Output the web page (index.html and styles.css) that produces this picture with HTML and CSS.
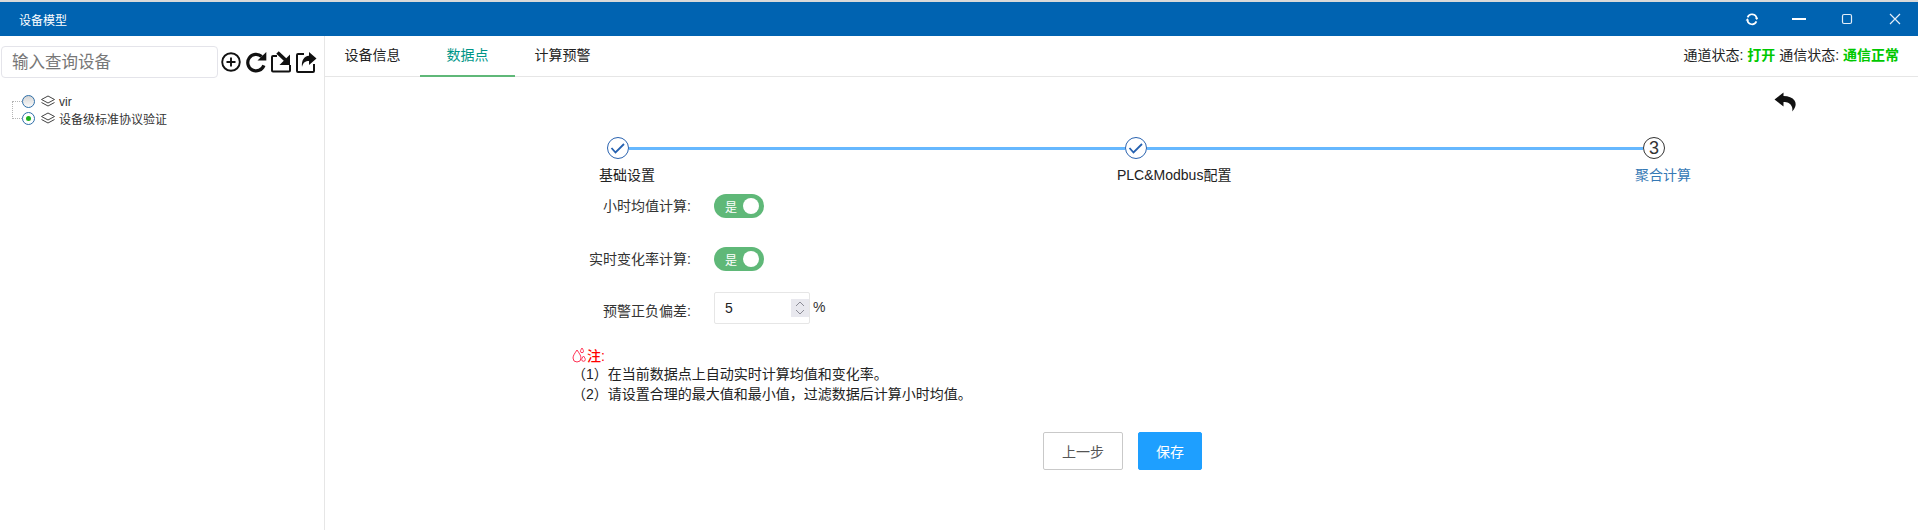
FILE: index.html
```html
<!DOCTYPE html>
<html lang="zh">
<head>
<meta charset="utf-8">
<title>设备模型</title>
<link rel="stylesheet" href="styles.css">
</head>
<body>
<header class="titlebar">
  <span class="title">设备模型</span>
  <div class="win-controls">
    <svg class="win-icon" viewBox="0 0 14 14"><path d="M3.600 5.400A4.700 4.700 0 0 1 12.700 6.400" fill="none" stroke="#fff" stroke-width="1.700"/><path d="M12.400 9.400A4.700 4.700 0 0 1 3.400 8.200" fill="none" stroke="#fff" stroke-width="1.700"/><path d="M10.900 5.800h3.600L12.700 8zM1.600 8.400h3.600L3.400 6.200z" fill="#fff"/></svg>
    <svg class="win-icon" viewBox="0 0 14 14"><path d="M0 7h14" stroke="#fff" stroke-width="2"/></svg>
    <svg class="win-icon" viewBox="0 0 14 14"><rect x="2.500" y="2.500" width="9" height="9" rx="1.500" fill="none" stroke="#e4eef8" stroke-width="1.200"/></svg>
    <svg class="win-icon" viewBox="0 0 14 14"><path d="M2 2l10 10M12 2L2 12" stroke="#e4eef8" stroke-width="1.200"/></svg>
  </div>
</header>
<div class="layout">
  <aside class="sidebar">
    <div class="search-row">
      <input class="search" type="text" placeholder="输入查询设备">
      <div class="tools">
        <svg class="tool" viewBox="0 0 22 22"><circle cx="11" cy="11" r="8.800" fill="none" stroke="#111" stroke-width="1.900"/><path d="M6.500 11h9M11 6.500v9" stroke="#111" stroke-width="1.900"/></svg>
        <svg class="tool" viewBox="0 0 22 22"><path d="M18.900 14.400A8.300 8.300 0 1 1 16.700 5.500" fill="none" stroke="#111" stroke-width="3.200"/><path d="M12.500 9.500h8.800V1z" fill="#111"/></svg>
        <svg class="tool" viewBox="0 0 22 22"><path d="M7 5H3a1 1 0 0 0-1 1v13.500a1 1 0 0 0 1 1h16a1 1 0 0 0 1-1V14" fill="none" stroke="#111" stroke-width="2"/><path d="M7.500 1.500l8 7.500" fill="none" stroke="#111" stroke-width="3.600"/><path d="M20 3.500V14H9.500z" fill="#111"/></svg>
        <svg class="tool" viewBox="0 0 22 22"><path d="M9 3H3a1 1 0 0 0-1 1v16a1 1 0 0 0 1 1h15a1 1 0 0 0 1-1v-7" fill="none" stroke="#111" stroke-width="2"/><path d="M14 1l7.500 6.500-7.500 6.500v-4C10.500 10 8 11.500 7 16 6.200 10 9 5 14 4.800z" fill="#111"/></svg>
      </div>
    </div>
    <ul class="tree">
      <li class="node node-first">
        <span class="radio"></span>
        <svg class="layers" viewBox="0 0 16 14"><path d="M8 1l6.500 3.500L8 8 1.500 4.500z" fill="none" stroke="#444" stroke-width="1"/><path d="M1.500 7.500L8 11l6.500-3.500" fill="none" stroke="#444" stroke-width="1"/></svg>
        <span>vir</span>
      </li>
      <li class="node">
        <span class="radio radio-on"></span>
        <svg class="layers" viewBox="0 0 16 14"><path d="M8 1l6.500 3.500L8 8 1.500 4.500z" fill="none" stroke="#444" stroke-width="1"/><path d="M1.500 7.500L8 11l6.500-3.500" fill="none" stroke="#444" stroke-width="1"/></svg>
        <span>设备级标准协议验证</span>
      </li>
    </ul>
  </aside>
  <main class="main">
    <nav class="tabs">
      <a class="tab">设备信息</a>
      <a class="tab tab-active">数据点</a>
      <a class="tab">计算预警</a>
      <div class="status">通道状态: <b class="ok">打开</b> 通信状态: <b class="ok">通信正常</b></div>
    </nav>
    <section class="content">
      <div class="back-row">
        <svg class="back" viewBox="0 0 22 20"><path d="M9.500 0.500L0.500 7.500l9 7V10c4 0 7 1 8.500 5 .5 1.500.5 3 0 4.500 4-4 4.500-8 2.500-11-2-3-6-4.500-11-4.500z" fill="#111"/></svg>
      </div>
      <div class="steps">
        <div class="step step-done">
          <div class="step-head">
            <span class="step-icon"><svg viewBox="1 1 20 20"><path d="M4.500 11l4 4.500L17 7" fill="none" stroke="#2561b0" stroke-width="1.800"/></svg></span>
            <span class="step-line"></span>
          </div>
          <div class="step-title">基础设置</div>
        </div>
        <div class="step step-done">
          <div class="step-head">
            <span class="step-icon"><svg viewBox="1 1 20 20"><path d="M4.500 11l4 4.500L17 7" fill="none" stroke="#2561b0" stroke-width="1.800"/></svg></span>
            <span class="step-line"></span>
          </div>
          <div class="step-title">PLC&amp;Modbus配置</div>
        </div>
        <div class="step step-last">
          <div class="step-head">
            <span class="step-icon step-icon-num">3</span>
          </div>
          <div class="step-title step-title-cur">聚合计算</div>
        </div>
      </div>
      <form class="form">
        <div class="form-row row-switch">
          <label class="form-label">小时均值计算:</label>
          <span class="switch"><span class="switch-text">是</span><span class="knob"></span></span>
        </div>
        <div class="form-row row-switch">
          <label class="form-label">实时变化率计算:</label>
          <span class="switch"><span class="switch-text">是</span><span class="knob"></span></span>
        </div>
        <div class="form-row row-number">
          <label class="form-label form-label-low">预警正负偏差:</label>
          <span class="number">
            <span class="number-value">5</span>
            <span class="spinner"><svg viewBox="0 0 18 18"><path d="M5 7l4-4 4 4M5 11l4 4 4-4" fill="none" stroke="#8c8c96" stroke-width="1"/></svg></span>
          </span>
          <span class="unit">%</span>
        </div>
      </form>
      <div class="note">
        <div class="note-head">
          <svg class="drops" viewBox="0 0 15 16"><path d="M5 3C3 6 1 8.500 1 11a4 4 0 0 0 8 0C9 8.500 7 6 5 3z" fill="none" stroke="#f35" stroke-width="1"/><path d="M11.500 9c-1 1.500-1.800 2.500-1.800 3.500a1.800 1.800 0 0 0 3.600 0c0-1-.8-2-1.800-3.500z" fill="none" stroke="#f35" stroke-width="1"/><path d="M10 1C9.200 2.500 8.500 3.200 8.500 4.200a1.500 1.500 0 0 0 3 0C11.500 3.200 10.800 2.500 10 1z" fill="none" stroke="#f35" stroke-width="1"/></svg>
          <span>注:</span>
        </div>
        <p class="note-line">（1）在当前数据点上自动实时计算均值和变化率。</p>
        <p class="note-line">（2）请设置合理的最大值和最小值，过滤数据后计算小时均值。</p>
      </div>
      <div class="actions">
        <button class="btn" type="button">上一步</button>
        <button class="btn btn-primary" type="button">保存</button>
      </div>
    </section>
  </main>
</div>
</body>
</html>
```
FILE: styles.css
```css
* { box-sizing: border-box; }
html, body { margin: 0; padding: 0; height: 100%; }
body {
  width: 1918px;
  height: 530px;
  overflow: hidden;
  background: #fff;
  font-family: "Liberation Sans", "Noto Sans CJK SC", sans-serif;
  color: #222;
  display: flex;
  flex-direction: column;
}
.titlebar {
  height: 36px;
  border-top: 2px solid #d9d9d9;
  background: #0063b1;
  color: #fff;
  display: flex;
  align-items: center;
  justify-content: space-between;
  padding-left: 19px;
  font-size: 12px;
  flex: none;
}
.win-controls { display: flex; align-items: center; padding-right: 16px; gap: 34px; }
.win-icon { width: 14px; height: 14px; display: block; }
.layout { flex: 1; display: flex; min-height: 0; }
.sidebar { width: 325px; border-right: 1px solid #e6e6e6; flex: none; padding: 10px 0 0 1px; }
.search-row { display: flex; align-items: center; }
.search {
  width: 217px; height: 32px; border: 1px solid #e4e4ea; border-radius: 4px;
  padding: 0 10px; font: 16.500px "Liberation Sans", "Noto Sans CJK SC", sans-serif; outline: none;
}
.search::placeholder { color: #777; }
.tools { display: flex; margin-left: 2px; gap: 3px; }
.tool { width: 22px; height: 22px; display: block; }
.tree { list-style: none; margin: 15px 0 0 11px; padding: 0; font-size: 12px; color: #333; }
.node { height: 17px; display: flex; align-items: center; position: relative; }
.node::before { content: ""; width: 10px; border-top: 1px dotted #b5b5b5; flex: none; }
.node-first::after {
  content: ""; position: absolute; left: 0; top: 8px; height: 18px; border-left: 1px dotted #b5b5b5;
}
.radio {
  width: 13px; height: 13px; border-radius: 50%; border: 1.500px solid #2d6ea8;
  background: linear-gradient(#d5d5d5, #fafafa); flex: none;
  display: flex; align-items: center; justify-content: center;
}
.radio-on { background: #fff; }
.radio-on::after { content: ""; width: 5px; height: 5px; border-radius: 50%; background: #1eb01e; }
.layers { width: 16px; height: 14px; margin: 0 3px 0 5px; flex: none; }
.main { flex: 1; min-width: 0; display: flex; flex-direction: column; }
.tabs {
  height: 41px; border-bottom: 1px solid #e6e6e6; display: flex; align-items: stretch; font-size: 14px; color: #222; flex: none;
}
.tab { width: 95px; text-align: center; line-height: 38px; height: 41px; }
.tab-active { color: #009688; border-bottom: 2px solid #5fb878; }
.status { margin-left: auto; font-size: 14px; line-height: 39px; padding-right: 19px; white-space: nowrap; }
.ok { color: #00c800; font-weight: bold; }
.content { flex: 1; }
.back-row { display: flex; justify-content: flex-end; padding: 15px 122px 0 0; height: 35px; margin-bottom: 25px; }
.back { width: 22px; height: 20px; display: block; }
.steps { display: flex; margin-left: 274px; }
.step { width: 518px; flex: none; }
.step-last { width: 60px; }
.step-head { display: flex; align-items: center; padding-left: 8px; height: 22px; }
.step-icon {
  width: 22px; height: 22px; border-radius: 50%; border: 1px solid #2a63b0; flex: none; display: block; background: #fff;
}
.step-icon svg { display: block; width: 20px; height: 20px; }
.step-icon-num {
  border-color: #333; color: #333; font-size: 18px; text-align: center; line-height: 20px;
}
.step-line { flex: 1; height: 3px; margin: 1px -8px 0 0; background: #66b8ff; }
.step-title { font-size: 14px; line-height: 20px; margin-top: 6px; color: #222; white-space: nowrap; }
.step-title-cur { color: #3679b5; }
.form { margin-top: 9px; }
.form-row { display: flex; align-items: center; }
.row-switch { height: 24px; margin-bottom: 29px; }
.row-number { height: 32px; margin-top: -8px; }
.form-label { width: 366px; text-align: right; font-size: 14px; margin-right: 23px; color: #333; flex: none; padding-bottom: 2px; }
.form-label-low { padding: 3px 0 0; }
.switch {
  width: 50px; height: 24px; border-radius: 12px; background: #5fb878; display: flex; align-items: center;
  padding: 0 5px 0 11px; color: #fff; font-size: 12px; justify-content: space-between;
}
.knob { width: 16px; height: 16px; border-radius: 50%; background: #fff; }
.number {
  width: 96px; height: 32px; border: 1px solid #e6e6e6; border-radius: 2px; display: flex; align-items: center;
  justify-content: space-between; font-size: 14px; padding-left: 10px;
}
.spinner { width: 18px; height: 18px; background: #e8e8ee; }
.spinner svg { display: block; width: 18px; height: 18px; }
.unit { font-size: 14px; margin-left: 3px; color: #333; margin-top: -2px; }
.note { margin: 21px 0 0 247px; font-size: 14px; color: #222; }
.note-head { color: #f00; display: flex; align-items: center; height: 19px; font-weight: 500; }
.drops { width: 15px; height: 16px; flex: none; }
.note-line { margin: 0; line-height: 20px; height: 20px; }
.actions { display: flex; gap: 15px; margin: 28px 0 0 718px; }
.btn {
  width: 80px; height: 38px; border: 1px solid #c9c9c9; border-radius: 2px; background: #fff; color: #555;
  font: 14px "Liberation Sans", "Noto Sans CJK SC", sans-serif; padding: 0;
}
.btn-primary { width: 64px; background: #1e9fff; border-color: #1e9fff; color: #fff; }
```
